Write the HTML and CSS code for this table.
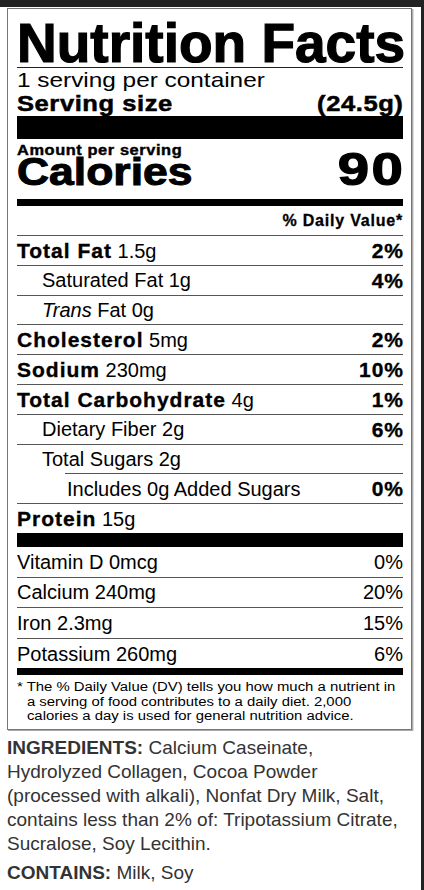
FILE: index.html
```html
<!DOCTYPE html>
<html lang="en">
<head>
<meta charset="utf-8">
<title>Nutrition Facts</title>
<link rel="stylesheet" href="styles.css">
</head>
<body>
<div class="topbar"></div>
<div class="page">
  <main class="main">
    <section class="label">
      <h1 class="title">Nutrition Facts</h1>
      <div class="servings"><span class="wide">1 serving per container</span></div>
      <div class="serving-size"><span class="wide">Serving size</span><span class="wide-r">(24.5g)</span></div>
      <div class="bar bar-xl"></div>
      <div class="calories">
        <div class="cal-left">
          <div class="amount"><span class="wide">Amount per serving</span></div>
          <div class="cal-label"><span class="wide">Calories</span></div>
        </div>
        <div class="cal-value"><span class="wide-r">90</span></div>
      </div>
      <div class="bar bar-md"></div>
      <div class="dv-head">% Daily Value*</div>
      <div class="row"><span><b>Total Fat</b> 1.5g</span><b class="pct">2%</b></div>
      <div class="row indent"><span>Saturated Fat 1g</span><b class="pct">4%</b></div>
      <div class="row indent"><span><i>Trans</i> Fat 0g</span></div>
      <div class="row"><span><b>Cholesterol</b> 5mg</span><b class="pct">2%</b></div>
      <div class="row"><span><b>Sodium</b> 230mg</span><b class="pct">10%</b></div>
      <div class="row"><span><b>Total Carbohydrate</b> 4g</span><b class="pct">1%</b></div>
      <div class="row indent"><span>Dietary Fiber 2g</span><b class="pct">6%</b></div>
      <div class="row indent"><span>Total Sugars 2g</span></div>
      <div class="row sub2"><span>Includes 0g Added Sugars</span><b class="pct">0%</b></div>
      <div class="row"><span><b>Protein</b> 15g</span></div>
      <div class="bar bar-lg"></div>
      <div class="vit"><span>Vitamin D 0mcg</span><span>0%</span></div>
      <div class="vit"><span>Calcium 240mg</span><span>20%</span></div>
      <div class="vit"><span>Iron 2.3mg</span><span>15%</span></div>
      <div class="vit"><span>Potassium 260mg</span><span>6%</span></div>
      <div class="bar bar-md"></div>
      <div class="footnote"><p class="foot-text">* The % Daily Value (DV) tells you how much a nutrient in<br>a serving of food contributes to a daily diet. 2,000<br>calories a day is used for general nutrition advice.</p></div>
    </section>
    <p class="ingredients"><b>INGREDIENTS:</b> Calcium Caseinate,<br>Hydrolyzed Collagen, Cocoa Powder<br>(processed with alkali), Nonfat Dry Milk, Salt,<br>contains less than 2% of: Tripotassium Citrate,<br>Sucralose, Soy Lecithin.</p>
    <p class="contains"><b>CONTAINS:</b> Milk, Soy</p>
  </main>
  <div class="edge"></div>
</div>
</body>
</html>
```

FILE: styles.css
```css
* {
  box-sizing: border-box;
}

html,
body {
  margin: 0;
  padding: 0;
}

body {
  width: 424px;
  height: 890px;
  overflow: hidden;
  background: #fff;
  color: #000;
  font-family: "Liberation Sans", Arial, sans-serif;
}

.topbar {
  height: 7px;
  background: #222;
}

.page {
  display: flex;
  height: 883px;
}

.main {
  flex: 1;
  min-width: 0;
  padding-left: 7px;
  padding-top: 1px;
}

.edge {
  width: 3px;
  background: #222;
}

.label {
  width: 405px;
  border: 1px solid #777;
  box-shadow: 1px 1px 0 #aaa, 2px 1px 0 #ddd;
  padding: 10px 8px 5.5px 9px;
}

/* horizontally widened text, as in the reference artwork */
.wide,
.wide-r {
  display: inline-block;
  white-space: nowrap;
}

.wide {
  transform-origin: left center;
}

.wide-r {
  transform-origin: right center;
}

.title {
  margin: 0;
  font-size: 55px;
  line-height: 48px;
  font-weight: bold;
  -webkit-text-stroke: 1.2px #000;
  white-space: nowrap;
  border-bottom: 1px solid #222;
}

.servings {
  font-size: 21px;
  line-height: 24px;
}

.servings .wide {
  transform: scaleX(1.16);
}

.serving-size {
  display: flex;
  justify-content: space-between;
  font-size: 22px;
  line-height: 24px;
  font-weight: bold;
  letter-spacing: 0.5px;
  -webkit-text-stroke: 0.5px #000;
}

.serving-size .wide,
.serving-size .wide-r {
  transform: scaleX(1.16);
}

.bar {
  background: #000;
}

.bar-xl {
  height: 23px;
}

.bar-lg {
  height: 14px;
}

.bar-md {
  height: 7px;
}

.calories {
  display: flex;
  justify-content: space-between;
  align-items: flex-start;
  padding: 4.1px 0 10.25px;
}

.amount {
  font-size: 14px;
  line-height: 14px;
  font-weight: bold;
  letter-spacing: 0.5px;
  -webkit-text-stroke: 0.4px #000;
}

.amount .wide {
  transform: scaleX(1.17);
}

.cal-label {
  font-size: 38px;
  line-height: 30px;
  font-weight: bold;
  -webkit-text-stroke: 1px #000;
}

.cal-label .wide {
  transform: scaleX(1.17);
}

.cal-value {
  margin-top: 5.65px;
  font-size: 47px;
  line-height: 40px;
  font-weight: bold;
  letter-spacing: 2px;
  -webkit-text-stroke: 1.2px #000;
}

.cal-value .wide-r {
  margin-right: -2px;
  transform: scaleX(1.2);
}

.dv-head {
  text-align: right;
  font-size: 16px;
  line-height: 29px;
  font-weight: bold;
  letter-spacing: 0.8px;
  -webkit-text-stroke: 0.3px #000;
}

.row {
  display: flex;
  justify-content: space-between;
  align-items: center;
  height: 29.8px;
  border-top: 1px solid #555;
  font-size: 20px;
  line-height: 1;
  white-space: nowrap;
}

.row b,
.pct {
  font-size: 21px;
  letter-spacing: 1px;
  -webkit-text-stroke: 0.35px #000;
}

.pct {
  margin-right: -1px;
}

.row i {
  font-style: italic;
}

.indent {
  padding-left: 25px;
}

.sub2 {
  margin-left: 48px;
  padding-left: 2px;
}

.vit {
  display: flex;
  justify-content: space-between;
  align-items: center;
  height: 29.6px;
  font-size: 20px;
  line-height: 1;
  white-space: nowrap;
}

.vit + .vit {
  height: 30.6px;
  border-top: 1px solid #555;
}

.footnote {
  padding-top: 5px;
}

.foot-text {
  width: max-content;
  margin: 0;
  padding-left: 8px;
  text-indent: -8px;
  font-size: 12px;
  line-height: 14.5px;
  white-space: nowrap;
  transform: scaleX(1.24);
  transform-origin: left top;
}

.ingredients,
.contains {
  margin: 0;
  color: #333;
  font-size: 19px;
  line-height: 24px;
  white-space: nowrap;
}

.ingredients {
  margin-top: 6px;
}

.contains {
  margin-top: 5px;
}
```
